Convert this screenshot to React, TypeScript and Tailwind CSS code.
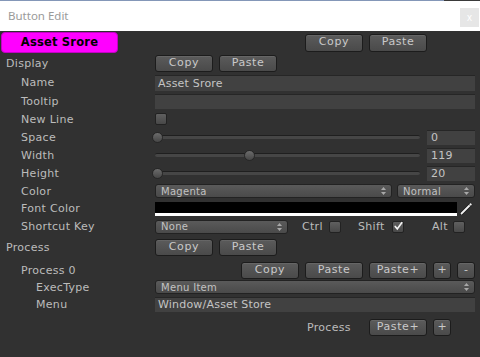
import React from "react";

const btn =
  "flex items-center justify-center h-[17px] rounded-[3px] border border-[#1c1c1c] bg-linear-to-b from-[#5b5b5b] to-[#4a4a4a] text-[11px] text-[#c9c9c9] tracking-[0.6px] shadow-[inset_0_1px_0_rgba(255,255,255,0.07)]";
const label = "text-[11px] text-[#bcbcbc] tracking-[0.3px] whitespace-nowrap translate-y-[1px]";
const field =
  "h-[15px] bg-[#414141] border-t border-[#262626] text-[11px] text-[#c4c4c4] pl-[3px] leading-[14px] tracking-[0.2px] whitespace-nowrap overflow-hidden";
const dropdown =
  "h-[14px] rounded-[3px] border border-[#222222] bg-linear-to-b from-[#5a5a5a] to-[#4a4a4a] text-[10px] text-[#c2c2c2] tracking-[0.3px] pl-[5px] pr-[5px] flex items-center justify-between";
const checkbox =
  "w-[12px] h-[12px] rounded-[2px] border border-[#222222] bg-linear-to-b from-[#606060] to-[#484848] flex items-center justify-center";

function Arrows() {
  return (
    <svg width="5" height="8" viewBox="0 0 5 8">
      <path d="M2.5 0 L5 3 L0 3 Z" fill="#a8a8a8" />
      <path d="M0 5 L5 5 L2.5 8 Z" fill="#a8a8a8" />
    </svg>
  );
}

function Slider({ thumb, value }: { thumb: string; value: string }) {
  return (
    <div className="flex-1 flex items-center">
      <div className="flex-1 relative h-[11px] flex items-center mr-[7px]">
        <div className="w-full h-[4px] rounded-full bg-[#464646] border-t border-[#1f1f1f]" />
        <div
          className={`absolute top-0 ${thumb} w-[11px] h-[11px] rounded-full bg-linear-to-b from-[#6c6c6c] to-[#464646] border border-[#262626]`}
        />
      </div>
      <div className={`w-[48px] ${field} pl-[4px]`}>{value}</div>
    </div>
  );
}

export default function App() {
  return (
    <div className="w-[480px] h-[357px] bg-[#313131] flex flex-col font-['DejaVu_Sans',sans-serif] overflow-hidden">
      {/* title */}
      <div className="flex h-[1px]">
        <div className="flex-1 bg-[#8497b8]" />
        <div className="w-[36px] bg-[#3a3a3a]" />
      </div>
      <div className="h-[30px] bg-white flex items-center justify-between pl-[8px] pr-[1px]">
        <span className="text-[11.5px] text-[#9a9a9a] font-['Noto_Sans',sans-serif]">Button Edit</span>
        <div className="w-[19px] h-[19px] bg-[#e6e6e6] flex items-center justify-center text-white text-[10px] mt-[3px] font-['Liberation_Sans',sans-serif]">
          x
        </div>
      </div>

      {/* row 0 */}
      <div className="h-[23px] flex items-center">
        <div className="ml-[1px] w-[117px] h-[21px] rounded-[4px] bg-[#ff00ff] border border-[#c400c4] flex items-center justify-center text-[11.5px] font-bold text-black tracking-[0.2px]">
          Asset Srore
        </div>
        <div className="ml-auto mr-[53px] flex gap-[6px]">
          <div className={`${btn} w-[58px] h-[18px]`}>Copy</div>
          <div className={`${btn} w-[58px] h-[18px]`}>Paste</div>
        </div>
      </div>

      {/* Display */}
      <div className="h-[19px] flex items-center pr-[5px]">
        <div className={`w-[155px] pl-[6px] ${label}`}>Display</div>
        <div className="flex gap-[6px]">
          <div className={`${btn} w-[58px]`}>Copy</div>
          <div className={`${btn} w-[58px]`}>Paste</div>
        </div>
      </div>

      {/* Name */}
      <div className="h-[19px] flex items-center pr-[5px]">
        <div className={`w-[155px] pl-[21px] ${label}`}>Name</div>
        <div className={`flex-1 ${field} h-[16px] leading-[15px]`}>Asset Srore</div>
      </div>

      {/* Tooltip */}
      <div className="h-[18px] flex items-center pr-[5px]">
        <div className={`w-[155px] pl-[21px] ${label}`}>Tooltip</div>
        <div className={`flex-1 ${field}`}></div>
      </div>

      {/* New Line */}
      <div className="h-[18px] flex items-center pr-[5px]">
        <div className={`w-[155px] pl-[21px] ${label}`}>New Line</div>
        <div className={checkbox} />
      </div>

      {/* Space */}
      <div className="h-[18px] flex items-center pr-[5px]">
        <div className={`w-[155px] pl-[21px] ${label}`}>Space</div>
        <Slider thumb="left-[-3px]" value="0" />
      </div>

      {/* Width */}
      <div className="h-[18px] flex items-center pr-[5px]">
        <div className={`w-[155px] pl-[21px] ${label}`}>Width</div>
        <Slider thumb="left-[89px]" value="119" />
      </div>

      {/* Height */}
      <div className="h-[18px] flex items-center pr-[5px]">
        <div className={`w-[155px] pl-[21px] ${label}`}>Height</div>
        <Slider thumb="left-[-3px]" value="20" />
      </div>

      {/* Color */}
      <div className="h-[18px] flex items-center pr-[5px]">
        <div className={`w-[155px] pl-[21px] ${label}`}>Color</div>
        <div className="flex-1 flex gap-[5px]">
          <div className={`flex-1 ${dropdown}`}>
            <span>Magenta</span>
            <Arrows />
          </div>
          <div className={`w-[78px] ${dropdown}`}>
            <span>Normal</span>
            <Arrows />
          </div>
        </div>
      </div>

      {/* Font Color */}
      <div className="h-[17px] flex items-center pr-[5px]">
        <div className={`w-[155px] pl-[21px] ${label}`}>Font Color</div>
        <div className="flex-1 h-[14px] flex flex-col">
          <div className="flex-1 bg-black" />
          <div className="h-[3px] bg-white" />
        </div>
        <div className="w-[18px] flex justify-center">
          <svg width="13" height="13" viewBox="0 0 13 13">
            <path d="M1.5 11.5 L10 3" stroke="#1a1a1a" strokeWidth="3.4" strokeLinecap="round" />
            <path d="M1.5 11.5 L10 3" stroke="#f2f2f2" strokeWidth="1.8" strokeLinecap="round" />
            <path d="M8.8 2.2 L10.8 0.8 L12.2 2.2 L10.8 4.2 Z" fill="#f2f2f2" stroke="#1a1a1a" strokeWidth="0.6" />
          </svg>
        </div>
      </div>

      {/* Shortcut Key */}
      <div className="h-[19px] flex items-center pr-[5px]">
        <div className={`w-[155px] pl-[21px] ${label}`}>Shortcut Key</div>
        <div className={`w-[133px] ${dropdown}`}>
          <span>None</span>
          <Arrows />
        </div>
        <span className={`ml-[14px] w-[27px] ${label}`}>Ctrl</span>
        <div className={checkbox} />
        <span className={`ml-[17px] w-[34px] ${label}`}>Shift</span>
        <div className={checkbox}>
          <svg width="11" height="10" viewBox="0 0 11 10" className="mt-[-2px] ml-[1px]">
            <path d="M1.5 5.5 L4 8.5 L9.5 1" stroke="#f4f4f4" strokeWidth="2" fill="none" strokeLinecap="round" />
          </svg>
        </div>
        <span className={`ml-[28px] w-[21px] ${label}`}>Alt</span>
        <div className={checkbox} />
      </div>

      {/* Process */}
      <div className="h-[22px] flex items-center pr-[5px]">
        <div className={`w-[155px] pl-[6px] ${label}`}>Process</div>
        <div className="flex gap-[6px]">
          <div className={`${btn} w-[58px]`}>Copy</div>
          <div className={`${btn} w-[58px]`}>Paste</div>
        </div>
      </div>

      {/* Process 0 */}
      <div className="h-[22px] pt-[2px] flex items-center pr-[5px]">
        <div className={`w-[155px] pl-[21px] ${label}`}>Process 0</div>
        <div className="ml-auto flex gap-[6px]">
          <div className={`${btn} w-[58px]`}>Copy</div>
          <div className={`${btn} w-[58px]`}>Paste</div>
          <div className={`${btn} w-[58px]`}>Paste+</div>
          <div className={`${btn} w-[18px] tracking-normal`}>+</div>
          <div className={`${btn} w-[18px] tracking-normal`}>-</div>
        </div>
      </div>

      {/* ExecType */}
      <div className="h-[14px] flex items-center pr-[5px]">
        <div className={`w-[155px] pl-[36px] ${label}`}>ExecType</div>
        <div className={`flex-1 ${dropdown} h-[13px]`}>
          <span>Menu Item</span>
          <Arrows />
        </div>
      </div>

      {/* Menu */}
      <div className="h-[20px] flex items-center pr-[5px]">
        <div className={`w-[155px] pl-[36px] ${label}`}>Menu</div>
        <div className={`flex-1 ${field}`}>Window/Asset Store</div>
      </div>

      {/* last row */}
      <div className="h-[26px] flex items-center pr-[29px]">
        <div className="ml-auto flex items-center">
          <span className={`w-[62px] ${label}`}>Process</span>
          <div className={`${btn} w-[58px]`}>Paste+</div>
          <div className={`${btn} w-[18px] ml-[6px] tracking-normal`}>+</div>
        </div>
      </div>
    </div>
  );
}
